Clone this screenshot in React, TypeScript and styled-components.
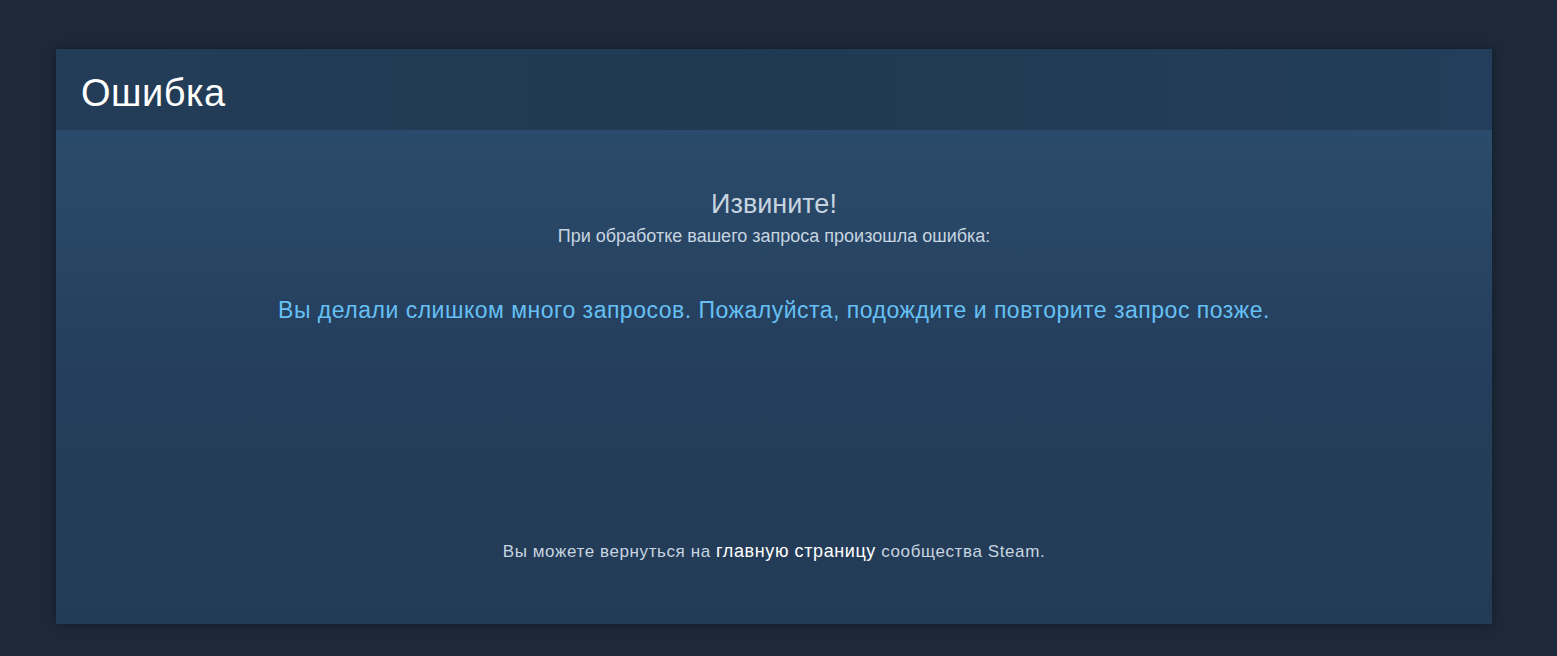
import React from "react";
import styled, { createGlobalStyle } from "styled-components";

const GlobalStyle = createGlobalStyle`
  html, body {
    margin: 0;
    padding: 0;
    background: #1d2939;
  }
  body {
    font-family: Arial, "Liberation Sans", Helvetica, sans-serif;
  }
`;

const Page = styled.div`
  min-height: 656px;
  padding: 49px 65px 32px 56px;
  box-sizing: border-box;
`;

const Panel = styled.div`
  width: 1436px;
  box-shadow: 0 0 10px rgba(0, 0, 0, 0.35);
  display: flex;
  flex-direction: column;
`;

const Header = styled.div`
  height: 81px;
  box-sizing: border-box;
  padding: 0 25px;
  display: flex;
  align-items: center;
  background: linear-gradient(to right, #233c57 0%, #213a53 50%, #233e5a 100%);
`;

const Title = styled.h1`
  margin: 0;
  padding-top: 6px;
  font-size: 38px;
  letter-spacing: 0.5px;
  font-weight: normal;
  color: #ffffff;
  line-height: 1;
`;

const Body = styled.div`
  height: 494px;
  box-sizing: border-box;
  padding: 58px 20px 0;
  display: flex;
  flex-direction: column;
  align-items: center;
  text-align: center;
  background: linear-gradient(to bottom, #2b4b6c 0%, #243e5b 50%, #233b56 100%);
`;

const Sorry = styled.h2`
  margin: 0;
  font-size: 27px;
  font-weight: normal;
  line-height: 32px;
  color: #c7d5e0;
`;

const Sub = styled.div`
  margin-top: 5px;
  font-size: 18px;
  line-height: 22px;
  color: #c7d5e0;
`;

const Message = styled.div`
  margin-top: 49px;
  font-size: 23px;
  letter-spacing: 0.5px;
  line-height: 28px;
  color: #66c0f4;
`;

const Footer = styled.div`
  margin-top: auto;
  margin-bottom: 61px;
  font-size: 17px;
  letter-spacing: 0.6px;
  line-height: 22px;
  color: #c7d5e0;
`;

const Link = styled.a`
  color: #ffffff;
  font-size: 18px;
  text-decoration: none;
`;

export default function App() {
  return (
    <>
      <GlobalStyle />
      <Page>
        <Panel>
          <Header>
            <Title>Ошибка</Title>
          </Header>
          <Body>
            <Sorry>Извините!</Sorry>
            <Sub>При обработке вашего запроса произошла ошибка:</Sub>
            <Message>
              Вы делали слишком много запросов. Пожалуйста, подождите и повторите запрос позже.
            </Message>
            <Footer>
              Вы можете вернуться на <Link href="#">главную страницу</Link> сообщества Steam.
            </Footer>
          </Body>
        </Panel>
      </Page>
    </>
  );
}
